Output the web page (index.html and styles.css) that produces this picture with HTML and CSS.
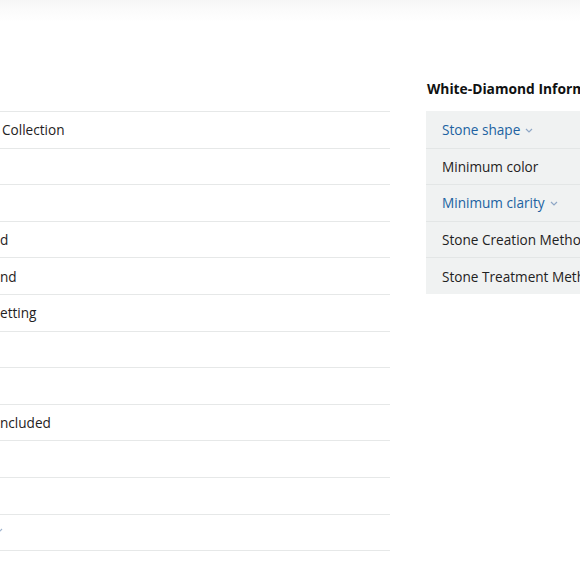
FILE: index.html
```html
<!DOCTYPE html>
<html lang="en">
<head>
<meta charset="utf-8">
<title>Product details</title>
<link rel="stylesheet" href="styles.css">
</head>
<body>
<div class="page">
  <div class="spacer"></div>
  <h3 class="heading">White-Diamond Information</h3>

  <div class="details">
    <div class="row"><span class="val lead">Collection</span></div>
    <div class="row"></div>
    <div class="row"></div>
    <div class="row"><span class="val">d</span></div>
    <div class="row"><span class="val">nd</span></div>
    <div class="row"><span class="val">etting</span></div>
    <div class="row"></div>
    <div class="row"></div>
    <div class="row"><span class="val">ncluded</span></div>
    <div class="row"></div>
    <div class="row"></div>
    <div class="row"><svg class="chev cut" width="8" height="5" viewBox="0 0 8 5"><path d="M1 1l3 3 3-3" fill="none" stroke="#9fb4cf" stroke-width="1.2"/></svg></div>
    <div class="row"></div>
    <div class="row short"></div>
  </div>

  <div class="info">
    <div class="irow"><span class="link">Stone shape</span><svg class="chev" width="8" height="5" viewBox="0 0 8 5"><path d="M1 1l3 3 3-3" fill="none" stroke="#8fa7c6" stroke-width="1.2"/></svg></div>
    <div class="irow"><span class="label">Minimum color</span></div>
    <div class="irow"><span class="link">Minimum clarity</span><svg class="chev" width="8" height="5" viewBox="0 0 8 5"><path d="M1 1l3 3 3-3" fill="none" stroke="#8fa7c6" stroke-width="1.2"/></svg></div>
    <div class="irow"><span class="label">Stone Creation Method</span></div>
    <div class="irow"><span class="label">Stone Treatment Method</span></div>
  </div>
</div>
</body>
</html>
```

FILE: styles.css
```css
html, body {
  margin: 0;
  padding: 0;
  overflow: hidden;
}
body {
  width: 580px;
  height: 580px;
  background: linear-gradient(#f6f6f6 0px, #fbfbfb 10px, #ffffff 22px);
  font-family: "Open Sans", "Liberation Sans", Arial, sans-serif;
  font-size: 13.6px;
  color: #0f1111;
}
.page {
  display: grid;
  grid-template-columns: 390px 300px;
  grid-template-rows: 79px 20px auto;
  column-gap: 36px;
  row-gap: 0;
}
.spacer {
  grid-column: 1 / 3;
  grid-row: 1;
}
.heading {
  grid-column: 2;
  grid-row: 2;
  margin: 0;
  font-size: 13.8px;
  line-height: 20px;
  font-weight: 700;
  color: #0f1111;
  white-space: nowrap;
  padding-left: 1px;
}
.details {
  grid-column: 1;
  grid-row: 3;
  margin-top: 12px;
  display: flex;
  flex-direction: column;
}
.row {
  box-sizing: border-box;
  height: 36.6px;
  border-top: 1px solid #e6e8e8;
  display: flex;
  align-items: center;
  line-height: 20px;
  padding-top: 1px;
}
.row.short {
  height: 17px;
}
.val {
  color: #1f2222;
  white-space: nowrap;
}
.val.lead {
  padding-left: 2px;
}
.info {
  grid-column: 2;
  grid-row: 3;
  margin-top: 12px;
  align-self: start;
  background: #f0f2f2;
  display: flex;
  flex-direction: column;
}
.irow {
  box-sizing: border-box;
  height: 36.6px;
  border-top: 1px solid #e3e6e6;
  display: flex;
  align-items: center;
  padding-left: 16px;
  padding-top: 1px;
  line-height: 20px;
  white-space: nowrap;
}
.irow:first-child {
  border-top: 0;
}
.link {
  color: #2162a1;
}
.label {
  color: #1f2222;
}
.chev {
  margin-left: 5px;
  margin-top: 1px;
}
.chev.cut {
  margin-left: -5px;
  margin-top: -4px;
}
```
